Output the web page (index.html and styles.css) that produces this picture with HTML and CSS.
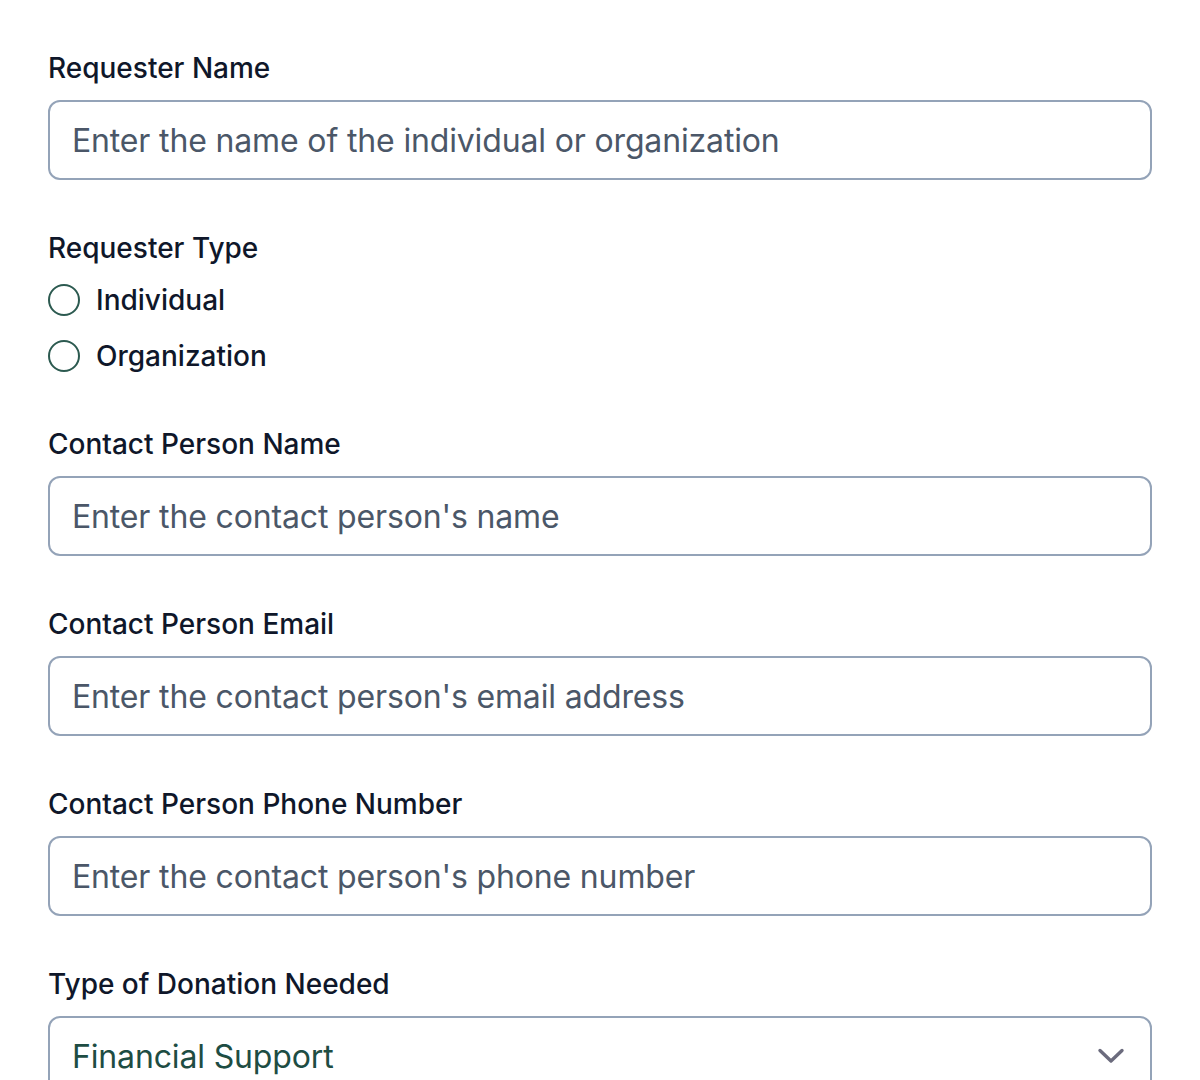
FILE: index.html
```html
<!DOCTYPE html>
<html lang="en">
<head>
<meta charset="utf-8">
<title>Donation Request</title>
<link rel="stylesheet" href="styles.css">
</head>
<body>
<form class="form">
  <div class="field">
    <label class="label" for="rname">Requester Name</label>
    <input class="input" id="rname" type="text" placeholder="Enter the name of the individual or organization">
  </div>
  <div class="field">
    <span class="label">Requester Type</span>
    <div class="radios">
      <label class="radio"><input type="radio" name="rtype"><span class="radio-text">Individual</span></label>
      <label class="radio"><input type="radio" name="rtype"><span class="radio-text">Organization</span></label>
    </div>
  </div>
  <div class="field">
    <label class="label" for="cname">Contact Person Name</label>
    <input class="input" id="cname" type="text" placeholder="Enter the contact person's name">
  </div>
  <div class="field">
    <label class="label" for="cemail">Contact Person Email</label>
    <input class="input" id="cemail" type="email" placeholder="Enter the contact person's email address">
  </div>
  <div class="field">
    <label class="label" for="cphone">Contact Person Phone Number</label>
    <input class="input" id="cphone" type="tel" placeholder="Enter the contact person's phone number">
  </div>
  <div class="field">
    <label class="label" for="dtype">Type of Donation Needed</label>
    <div class="select-wrap">
      <select class="input select" id="dtype">
        <option>Financial Support</option>
        <option>Food</option>
        <option>Clothing</option>
      </select>
      <svg class="chevron" width="28" height="16" viewBox="0 0 28 16" aria-hidden="true">
        <path d="M3 2.5 L14 13 L25 2.5" fill="none" stroke="#6b6b7d" stroke-width="3.4" stroke-linecap="round" stroke-linejoin="round"/>
      </svg>
    </div>
  </div>
</form>
</body>
</html>
```

FILE: styles.css
```css
* { box-sizing: border-box; }
html, body { margin: 0; padding: 0; background: #ffffff; }
body {
  font-family: Inter, "Noto Sans", sans-serif;
  color: #0f172a;
}
.form {
  padding: 48px;
  display: flex;
  flex-direction: column;
  gap: 48px;
}
.field {
  display: flex;
  flex-direction: column;
  gap: 12px;
}
.label {
  font-size: 28px;
  line-height: 40px;
  font-weight: 500;
  color: #0f172a;
}
.input {
  width: 100%;
  height: 80px;
  border: 2px solid #94a3b8;
  border-radius: 12px;
  padding: 0 22px;
  font-family: Inter, "Noto Sans", sans-serif;
  font-size: 32px;
  letter-spacing: -0.15px;
  color: #1e4d43;
  background: #ffffff;
  outline: none;
}
.input::placeholder {
  color: #4b5768;
  opacity: 1;
}
.radios {
  display: flex;
  flex-direction: column;
  gap: 16px;
}
.radio {
  display: flex;
  align-items: center;
  gap: 16px;
  height: 40px;
  font-size: 28px;
  font-weight: 500;
  color: #0f172a;
}
.radio input {
  appearance: none;
  -webkit-appearance: none;
  margin: 0;
  width: 32px;
  height: 32px;
  border: 2px solid #2c5a50;
  border-radius: 50%;
  background: #ffffff;
  flex: none;
}
.select-wrap {
  position: relative;
}
.select {
  appearance: none;
  -webkit-appearance: none;
  padding-right: 64px;
}
.chevron {
  position: absolute;
  right: 27px;
  top: 32px;
  pointer-events: none;
}
```
